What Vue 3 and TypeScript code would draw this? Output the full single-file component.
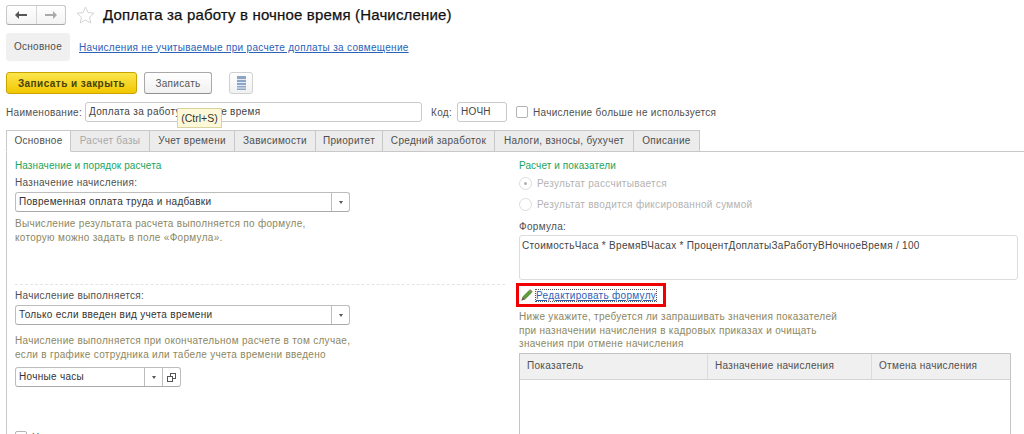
<script setup lang="ts">
const tabs = [
  { name: 'Основное', width: 65, active: true },
  { name: 'Расчет базы', width: 79, disabled: true },
  { name: 'Учет времени', width: 85 },
  { name: 'Зависимости', width: 81 },
  { name: 'Приоритет', width: 67 },
  { name: 'Средний заработок', width: 112 },
  { name: 'Налоги, взносы, бухучет', width: 139 },
  { name: 'Описание', width: 66 },
]
</script>

<template>
  <div class="page">
    <div class="head">
      <div class="nav">
        <span class="nav-btn">
          <svg width="14" height="10" viewBox="0 0 14 10"><path d="M1 5l4-4v3h8v2H5v3z" fill="#555" /></svg>
        </span>
        <span class="nav-btn">
          <svg width="14" height="10" viewBox="0 0 14 10"><path d="M13 5L9 1v3H1v2h8v3z" fill="#aaa" /></svg>
        </span>
      </div>
      <svg class="star" width="19" height="18" viewBox="0 0 19 18">
        <path d="M9.5 1l2.5 5.6 6 .6-4.5 4 1.300 5.800-5.300-3-5.300 3 1.300-5.800-4.500-4 6-.6z" fill="#fff" stroke="#d4d4d4" />
      </svg>
      <h1>Доплата за работу в ночное время (Начисление)</h1>
    </div>

    <div class="sections">
      <span class="section-active">Основное</span>
      <a class="link">Начисления не учитываемые при расчете доплаты за совмещение</a>
    </div>

    <div class="toolbar">
      <button class="btn primary">Записать и закрыть</button>
      <button class="btn">Записать</button>
      <button class="btn icon-btn">
        <svg width="9" height="14" viewBox="0 0 9 14">
          <rect width="9" height="14" fill="#8ea6c6" />
          <path d="M0 3.500h9M0 6.500h9M0 9.500h9M0 12h9" stroke="#e4eaf2" />
        </svg>
      </button>
      <span class="tooltip">(Ctrl+S)</span>
    </div>

    <div class="name-row">
      <label class="name-label">Наименование:</label>
      <div class="input name-input">Доплата за работу в ночное время</div>
      <label class="code-label">Код:</label>
      <div class="input code-input">НОЧН</div>
      <span class="checkbox"></span>
      <span class="check-text">Начисление больше не используется</span>
    </div>

    <div class="tabs">
      <span
        v-for="tab in tabs"
        :key="tab.name"
        class="tab"
        :class="{ active: tab.active, disabled: tab.disabled }"
        :style="{ width: tab.width + 'px' }"
      >{{ tab.name }}</span>
    </div>

    <div class="panel">
      <div class="col left">
        <div class="group-title">Назначение и порядок расчета</div>
        <div class="field-label">Назначение начисления:</div>
        <div class="select wide">
          <span class="select-value">Повременная оплата труда и надбавки</span>
          <span class="select-btn"><i class="caret"></i></span>
        </div>
        <p class="hint first-hint">Вычисление результата расчета выполняется по формуле,<br />которую можно задать в поле «Формула».</p>
        <div class="dashed"></div>
        <div class="field-label">Начисление выполняется:</div>
        <div class="select wide">
          <span class="select-value">Только если введен вид учета времени</span>
          <span class="select-btn"><i class="caret"></i></span>
        </div>
        <p class="hint second-hint">Начисление выполняется при окончательном расчете в том случае,<br />если в графике сотрудника или табеле учета времени введено</p>
        <div class="select narrow">
          <span class="select-value">Ночные часы</span>
          <span class="select-btn"><i class="caret"></i></span>
          <span class="select-btn">
            <svg width="9" height="9" viewBox="0 0 9 9" fill="#fff" stroke="#555">
              <rect x="3.500" y=".5" width="5" height="5" />
              <rect x=".5" y="3.500" width="5" height="5" />
            </svg>
          </span>
        </div>
        <div class="bottom-check">
          <span class="checkbox"></span>
          <span class="check-text">Начисление выполняется вместе с другими начислениями</span>
        </div>
      </div>

      <div class="col right">
        <div class="group-title">Расчет и показатели</div>
        <div class="radio-row"><span class="radio on"></span>Результат рассчитывается</div>
        <div class="radio-row second"><span class="radio"></span>Результат вводится фиксированной суммой</div>
        <div class="field-label formula-label">Формула:</div>
        <div class="formula">СтоимостьЧаса * ВремяВЧасах * ПроцентДоплатыЗаРаботуВНочноеВремя / 100</div>
        <div class="edit-row">
          <svg width="13" height="13" viewBox="0 0 12 12">
            <path d="M2.500 7L8.500 1l2.500 2.500-6 6z" fill="#5f9a3c" />
            <path d="M8.500 1l1-.8 2.300 2.300-.8 1z" fill="#8a7a50" />
            <path d="M2.500 7L5 9.500l-3.800 1.300z" fill="#6b5a3a" />
          </svg>
          <a class="link focused">Редактировать формулу</a>
        </div>
        <p class="hint third-hint">Ниже укажите, требуется ли запрашивать значения показателей<br />при назначении начисления в кадровых приказах и очищать<br />значения при отмене начисления</p>
        <div class="table">
          <div class="thead">
            <span class="th c1">Показатель</span>
            <span class="th c2">Назначение начисления</span>
            <span class="th c3">Отмена начисления</span>
          </div>
        </div>
      </div>
    </div>
  </div>
</template>

<style>
html, body { margin: 0; background: #fff; overflow: hidden; }
</style>

<style scoped>
.page {
  width: 1024px;
  height: 434px;
  overflow: hidden;
  font-family: "Liberation Sans", Arial, sans-serif;
  font-size: 10px;
  letter-spacing: 0.3px;
  color: #4f4f4f;
  padding: 5px 0 0 6px;
  box-sizing: border-box;
}

.head {
  display: flex;
  align-items: center;
  height: 20px;
}
.nav {
  display: flex;
  width: 60px;
  height: 20px;
  box-sizing: border-box;
  border: 1px solid #c8c8c8;
  border-bottom-color: #a8a8a8;
  border-radius: 3px;
  background: linear-gradient(#fff, #f3f3f3);
}
.nav-btn {
  flex: 1;
  display: flex;
  align-items: center;
  justify-content: center;
}
.nav-btn + .nav-btn { border-left: 1px solid #d6d6d6; }
.star { margin-left: 10px; }
h1 {
  margin: -1px 0 0 8px;
  font-size: 15px;
  font-weight: 400;
  letter-spacing: 0.16px;
  color: #111;
  -webkit-text-stroke: 0.25px #111;
}

.sections {
  display: flex;
  align-items: center;
  margin-top: 8px;
  height: 28px;
}
.section-active {
  width: 64px;
  height: 28px;
  line-height: 28px;
  text-align: center;
  background: #f0f0f0;
  border-radius: 3px;
}
.link {
  color: #2a62b8;
  text-decoration: underline;
}
.sections .link { margin-left: 9px; }

.toolbar {
  position: relative;
  display: flex;
  margin-top: 11px;
  height: 22px;
}
.btn {
  height: 22px;
  box-sizing: border-box;
  padding: 0;
  width: 68px;
  border: 1px solid #a9a9a9;
  border-bottom-color: #8f8f8f;
  border-radius: 3px;
  background: linear-gradient(#fff, #f1f1f1);
  font: inherit;
  letter-spacing: inherit;
  color: #555;
  margin-left: 7px;
}
.btn.primary {
  width: 131px;
  margin-left: 0;
  border-color: #c9a400;
  background: linear-gradient(#fbe64f, #f2c700);
  font-weight: 700;
  letter-spacing: 0.45px;
  color: #4a4208;
}
.icon-btn {
  width: 24px;
  margin-left: 17px;
  border-color: #d0d0d0;
  display: flex;
  align-items: center;
  justify-content: center;
}
.tooltip {
  position: absolute;
  left: 171px;
  top: 36px;
  z-index: 2;
  width: 43px;
  height: 18px;
  line-height: 18px;
  text-align: center;
  background: #fdf9d8;
  border: 1px solid #d9d3a0;
  letter-spacing: 0;
  font-size: 10.500px;
  color: #333;
}

.name-row {
  display: flex;
  align-items: center;
  margin-top: 8px;
  height: 20px;
}
.name-label { width: 79px; }
.input {
  height: 20px;
  line-height: 18px;
  box-sizing: border-box;
  border: 1px solid #c9c9c9;
  border-radius: 3px;
  padding: 0 3px;
  color: #444;
}
.name-input { width: 337px; }
.code-label { margin-left: 9px; width: 26px; }
.code-input { width: 50px; }
.checkbox {
  width: 12px;
  height: 12px;
  flex: none;
  box-sizing: border-box;
  border: 1px solid #b4b4b4;
  border-radius: 2px;
  background: #fff;
}
.name-row .checkbox { margin-left: 9px; }
.check-text { margin-left: 5px; }

.tabs {
  display: flex;
  margin-top: 8px;
  height: 22px;
  box-sizing: border-box;
}
.tab {
  height: 22px;
  line-height: 20px;
  box-sizing: border-box;
  text-align: center;
  background: #ececec;
  border: 1px solid #c8c8c8;
  border-left: 0;
  white-space: nowrap;
}
.tab.active {
  background: #fff;
  border-left: 1px solid #c8c8c8;
  border-bottom-color: #fff;
  position: relative;
  z-index: 1;
}
.tab.disabled { color: #a8a8a8; }

.panel {
  display: flex;
  margin-top: -1px;
  border-top: 1px solid #c8c8c8;
  border-left: 1px solid #c8c8c8;
  height: 290px;
}
.col { flex: none; }
.left {
  width: 505px;
  padding: 7px 0 0 8px;
  box-sizing: border-box;
}
.right {
  width: 510px;
  padding: 7px 0 0 7px;
  box-sizing: border-box;
}

.group-title {
  height: 14px;
  line-height: 14px;
  color: #1aa35c;
  letter-spacing: 0.1px;
}
.field-label {
  margin-top: 3px;
  height: 13px;
  line-height: 13px;
}
.select {
  display: flex;
  height: 20px;
  margin-top: 3px;
  box-sizing: border-box;
  border: 1px solid #bdbdbd;
  border-bottom-color: #aaa;
  border-radius: 3px;
  color: #333;
}
.wide { width: 335px; }
.narrow { width: 166px; margin-top: 6px; }
.select-value {
  flex: 1;
  line-height: 18px;
  padding-left: 3px;
}
.select-btn {
  width: 17px;
  display: flex;
  align-items: center;
  justify-content: center;
  border-left: 1px solid #bdbdbd;
}
.caret {
  width: 0;
  height: 0;
  border: 2.500px solid transparent;
  border-top: 3px solid #555;
  border-bottom: 0;
}

.hint {
  margin: 0;
  line-height: 13.500px;
  color: #8c8762;
}
.first-hint { margin-top: 5px; }
.second-hint { margin-top: 9px; }
.third-hint { margin-top: 8px; }
.dashed {
  margin-top: 40px;
  border-top: 1px dashed #e4e4e4;
  width: 490px;
}
.dashed + .field-label { margin-top: 4px; }
.bottom-check {
  display: flex;
  align-items: center;
  margin-top: 44px;
}

.radio-row {
  display: flex;
  align-items: center;
  height: 14px;
  margin-top: 3px;
  color: #b3b3b3;
}
.radio-row.second { margin-top: 7px; }
.radio {
  width: 13px;
  height: 13px;
  box-sizing: border-box;
  border: 1px solid #dcdcdc;
  border-radius: 50%;
  margin-right: 5px;
  position: relative;
}
.radio.on::after {
  content: "";
  position: absolute;
  left: 4px;
  top: 4px;
  width: 3px;
  height: 3px;
  border-radius: 50%;
  background: #b0b0b0;
}
.formula-label { margin-top: 9px; }
.formula {
  margin-top: 2px;
  width: 499px;
  height: 45px;
  box-sizing: border-box;
  border: 1px solid #dcdcdc;
  border-radius: 3px;
  padding: 3px 2px;
  line-height: 14px;
  color: #444;
}
.edit-row {
  position: relative;
  display: flex;
  align-items: center;
  margin-top: 8px;
  height: 14px;
  padding-left: 1px;
}
.edit-row::after {
  content: "";
  position: absolute;
  left: -3px;
  top: -5px;
  width: 150px;
  height: 24px;
  box-sizing: border-box;
  border: 3px solid #f00000;
}
.focused {
  margin-left: 3px;
  outline: 1px dotted #555;
}
.table {
  margin-top: 2px;
  width: 492px;
  height: 90px;
  box-sizing: border-box;
  border: 1px solid #c4c4c4;
}
.thead {
  display: flex;
  height: 25px;
  background: #f0f0f0;
  border-bottom: 1px solid #d4d4d4;
}
.th {
  box-sizing: border-box;
  line-height: 24px;
  padding-left: 7px;
}
.c1 { width: 187px; }
.c2 { width: 164px; border-left: 1px solid #dcdcdc; }
.c3 { flex: 1; border-left: 1px solid #dcdcdc; }
</style>
